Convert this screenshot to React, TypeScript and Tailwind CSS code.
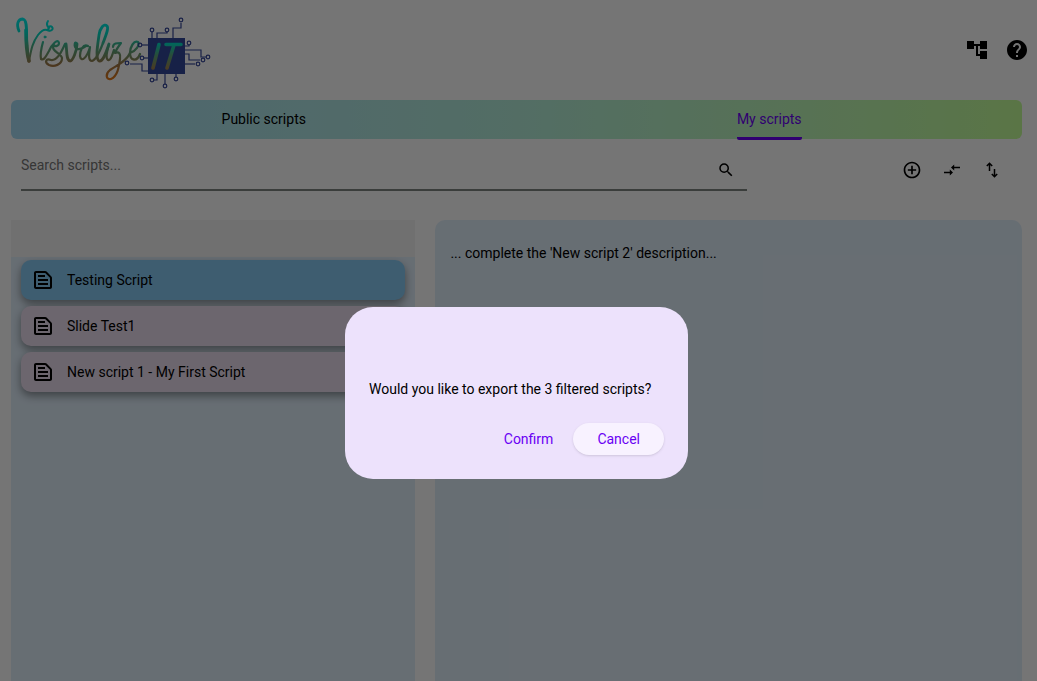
import { MdAccountTree, MdHelp, MdSearch, MdAddCircleOutline, MdOutlineTextSnippet } from "react-icons/md";

const scripts = [
  { name: "Testing Script", selected: true },
  { name: "Slide Test1", selected: false },
  { name: "New script 1 - My First Script", selected: false },
];

const traces = [
  "M152 38V32",
  "M157 38V33H167V32",
  "M173 38V28H181V23",
  "M148 45H142",
  "M148 58H144",
  "M148 71H142V64H130",
  "M185 46H189V45",
  "M185 50H201V57H206",
  "M185 54H189V60H200",
  "M185 64H195",
  "M157 74V80H154",
  "M165 74V84",
  "M176 74V77",
];

const pads = [
  [152, 30], [167, 30], [181, 20], [140, 45], [142, 58], [127, 63],
  [189, 43], [208, 57], [203, 60], [198, 64], [152, 80], [165, 86], [176, 79],
];

function Logo() {
  return (
    <svg viewBox="0 0 220 90" className="h-[90px] w-[220px]" role="img" aria-label="Visualize IT" fill="none" strokeLinecap="round" strokeLinejoin="round">
      <defs>
        <linearGradient id="ink" gradientUnits="userSpaceOnUse" x1="0" y1="18" x2="0" y2="80">
          <stop offset="0" stopColor="#00f0f0" />
          <stop offset="0.25" stopColor="#00dcc8" />
          <stop offset="0.45" stopColor="#48b088" />
          <stop offset="0.75" stopColor="#a07848" />
          <stop offset="1" stopColor="#e67814" />
        </linearGradient>
        <linearGradient id="chipInk" gradientUnits="userSpaceOnUse" x1="0" y1="43" x2="0" y2="70">
          <stop offset="0" stopColor="#00e0c8" />
          <stop offset="0.45" stopColor="#58a880" />
          <stop offset="1" stopColor="#a88048" />
        </linearGradient>
      </defs>
      <g stroke="url(#ink)" strokeWidth="2">
        <path d="M19 31C16 24 18 19 23 19C28 20 26 34 27 46C28 55 28 59 29 61" strokeWidth="2.8" />
        <path d="M26 30C26 42 27 54 29 61" strokeWidth="3.6" />
        <path d="M29 61C31 51 32 43 38 35C41 31 44 29 47 30C51 32 54 29 52 27C50 25 47 28 49 31M49 28C47 26 46 24 48 21" />
        <path d="M43 42C41 49 40 54 41 59C44 61 46 56 49 51C52 44 58 38 59 43C59 46 55 47 54 45C50 51 61 53 62 58C62 65 54 67 49 65C44 62 46 58 51 60C58 61 62 50 65 44" strokeWidth="2.2" />
        <path d="M66 44C67 50 66 60 70 61C73 61 77 50 77 44" strokeWidth="2.8" />
        <path d="M77 44C75 40 73 46 77 49C80 50 83 48 86 46M88 46C83 43 80 51 80 56C81 63 87 58 90 47C89 54 88 61 92 61C96 60 100 51 103 43" strokeWidth="2.2" />
        <path d="M103 43C106 35 109 28 107 26C104 23 100 28 99 35C98 43 95 58 99 61C103 62 106 53 109 44" strokeWidth="2.8" />
        <path d="M109 44C107 51 105 58 108 60C111 61 112 55 114 50M113 47C113 43 117 43 121 43C118 47 116 50 115 53C119 51 121 54 120 59C119 66 118 76 111 79C106 80 105 74 110 70C117 65 126 62 130 53" strokeWidth="2.2" />
        <path d="M130 53C136 51 140 45 138 42C134 40 130 47 130 53C130 61 137 62 140 54" strokeWidth="2.3" />
        <circle cx="45" cy="37" r="1" fill="url(#ink)" strokeWidth="1" />
      </g>
      <g stroke="#36489a" strokeWidth="1.2" strokeLinejoin="miter" strokeLinecap="butt">
        {traces.map((d) => <path key={d} d={d} />)}
        {pads.map(([x, y]) => <circle key={`${x}-${y}`} cx={x} cy={y} r="1.8" />)}
      </g>
      <rect x="148" y="38" width="37" height="36" fill="#34489c" />
      <path d="M159 44.5L153 68M166 44.5H181M174 45L167 68" stroke="url(#chipInk)" strokeWidth="3.6" />
    </svg>
  );
}

function MergeArrows() {
  return (
    <svg viewBox="0 0 20 20" className="size-5" fill="none" stroke="currentColor" strokeWidth="1.5" aria-hidden="true">
      <path d="M2 12.5H9M18 7.5H11" />
      <path d="M7.8 9.5L11 12.5L7.8 15.500ZM12.2 4.500L9 7.500L12.2 10.500Z" fill="currentColor" stroke="none" />
    </svg>
  );
}

function SortArrows() {
  return (
    <svg viewBox="0 0 20 20" className="size-5" fill="none" stroke="currentColor" strokeWidth="1.5" aria-hidden="true">
      <path d="M7.5 11V4M4.8 6L7.5 3.3L10.2 6M12.5 9V16M9.8 14L12.5 16.700L15.2 14" />
    </svg>
  );
}

export default function App() {
  return (
    <div className="relative h-screen overflow-hidden bg-white font-['Roboto',sans-serif] text-sm text-black">
      <div className="flex h-full flex-col">
        <header className="flex h-[100px] shrink-0 items-center justify-between">
          <div className="self-start"><Logo /></div>
          <div className="flex gap-4 pr-2">
            <button aria-label="Script tree"><MdAccountTree className="size-6" /></button>
            <button aria-label="Help"><MdHelp className="size-6" /></button>
          </div>
        </header>

        <div className="flex min-h-0 grow flex-col pr-[15px] pl-[11px]">
          <nav role="tablist" className="grid h-[39px] shrink-0 grid-cols-2 rounded-md bg-linear-to-r from-[#a9dcf5] via-[#b5eedb] to-[#c5ff99]">
            <button role="tab" aria-selected="false" className="flex justify-center">
              <span className="flex h-10 items-center border-b-3 border-transparent">Public scripts</span>
            </button>
            <button role="tab" aria-selected="true" className="flex justify-center text-[#6a00f4]">
              <span className="flex h-10 items-center rounded-b-xs border-b-3 border-[#6a00f4]">My scripts</span>
            </button>
          </nav>

          <div className="flex h-[81px] shrink-0 gap-[155px] px-[10px]">
            <label className="flex h-[52px] min-w-0 grow items-center border-b-2 border-[#7f8580] pr-3">
              <input type="text" aria-label="Search scripts" placeholder="Search scripts..." className="h-8 min-w-0 grow pt-px outline-none placeholder:text-[#777777]" />
              <MdSearch className="mt-3 size-[18px]" />
            </label>
            <div className="flex h-[62px] items-center gap-5 pr-[10px]">
              <button aria-label="Add script"><MdAddCircleOutline className="size-5" /></button>
              <button aria-label="Import scripts"><MergeArrows /></button>
              <button aria-label="Export scripts"><SortArrows /></button>
            </div>
          </div>

          <main className="flex min-h-0 grow gap-5">
            <section className="w-2/5 overflow-hidden bg-[#e1effb]">
              <div className="h-[37px] bg-[#f5f5f5]" />
              <ul className="flex flex-col gap-[6px] px-[10px] pt-[3px]">
                {scripts.map((script) => (
                  <li key={script.name}>
                    <button
                      className={`flex h-10 w-full items-center gap-3 rounded-[10px] px-[10px] text-left shadow-[0_4px_8px_rgba(0,0,0,0.4)] ${script.selected ? "bg-[#87cbf5]" : "bg-[#ecdff0]"}`}
                    >
                      <MdOutlineTextSnippet className="size-6" />
                      {script.name}
                    </button>
                  </li>
                ))}
              </ul>
            </section>
            <section className="grow rounded-t-[10px] bg-[#e1effb] px-[15px] pt-[23px]">
              <p>... complete the 'New script 2' description...</p>
            </section>
          </main>
        </div>
      </div>

      <div className="absolute inset-0 flex items-center justify-center bg-black/54 pt-[105px] pr-1">
        <div role="dialog" aria-modal="true" aria-label="Export scripts" className="min-w-[343px] rounded-[28px] bg-[#ede2fc] px-6 pt-[72px] pb-6">
          <p>Would you like to export the 3 filtered scripts?</p>
          <div className="mt-6 flex justify-end gap-5 text-[#6a00f4]">
            <button>Confirm</button>
            <button className="h-8 rounded-full bg-[#f8f2ff] px-6 shadow-sm">Cancel</button>
          </div>
        </div>
      </div>
    </div>
  );
}
